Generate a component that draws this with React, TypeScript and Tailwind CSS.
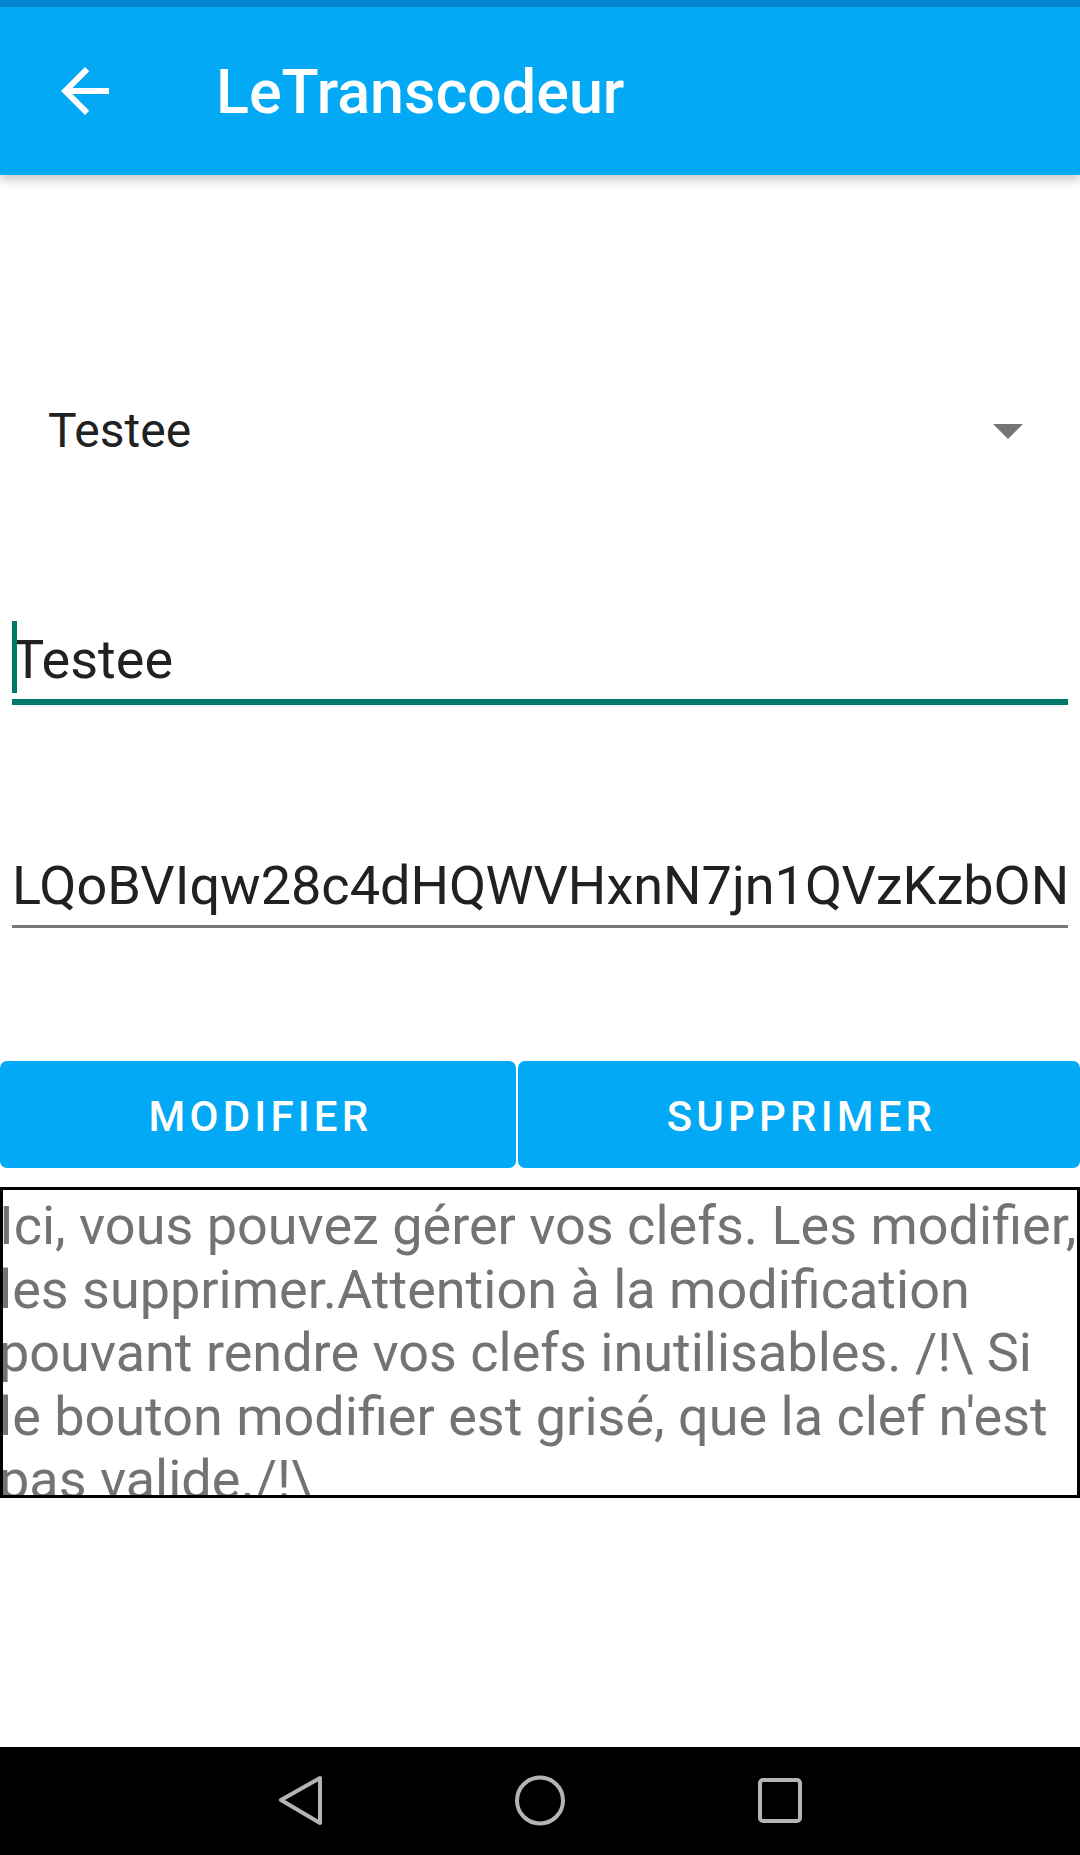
import React from "react";

function BackArrow() {
  return (
    <svg width="72" height="72" viewBox="0 0 24 24" className="ml-[49px] mt-[48px] shrink-0">
      <path fill="#ffffff" d="M20 11H7.83l5.59-5.59L12 4l-8 8 8 8 1.41-1.41L7.83 13H20v-2z" />
    </svg>
  );
}

function NavBar() {
  return (
    <div className="h-[108px] bg-black relative shrink-0">
      <svg width="1080" height="108" className="absolute left-0 top-0">
        <path
          d="M320 31 L281 53 L320 76 Z"
          fill="none"
          stroke="#b4b4b4"
          strokeWidth="4"
          strokeLinejoin="round"
        />
        <circle cx="540" cy="53.5" r="23" fill="none" stroke="#b4b4b4" strokeWidth="4" />
        <rect x="760" y="33" width="40" height="41" rx="3" fill="none" stroke="#b4b4b4" strokeWidth="4" />
      </svg>
    </div>
  );
}

export default function App() {
  return (
    <div className="w-[1080px] h-[1855px] flex flex-col bg-white font-[Roboto,sans-serif] overflow-hidden">
      <div className="h-[7px] bg-[#0288D1] shrink-0" />
      <div className="h-[168px] bg-[#03A9F4] flex items-start relative z-10 shrink-0 shadow-[0_5px_10px_rgba(0,0,0,0.22)]">
        <BackArrow />
        <div className="ml-[95px] mt-[50px] text-[61px] leading-[71px] font-medium text-white">
          LeTranscodeur
        </div>
      </div>

      <div className="flex-1 flex flex-col">
        {/* Spinner */}
        <div className="mt-[228px] h-[56px] flex items-center justify-between pl-[48px] pr-[57px]">
          <span className="text-[48px] leading-[56px] text-[#212121]">Testee</span>
          <svg width="30" height="15" viewBox="0 0 30 15">
            <path d="M0 0 L30 0 L15 15 Z" fill="#757575" />
          </svg>
        </div>

        {/* Edit text 1 (focused) */}
        <div className="mt-[169px] mx-[12px] relative">
          <div className="text-[54px] leading-[63px] text-[#212121]">Testee</div>
          <div className="absolute left-0 top-[-7px] w-[5px] h-[72px] bg-[#00796B]" />
          <div className="mt-[8px] h-[6px] bg-[#00796B]" />
        </div>

        {/* Edit text 2 */}
        <div className="mt-[149px] mx-[12px]">
          <div className="text-[54px] leading-[63px] text-[#212121] whitespace-nowrap overflow-hidden">
            LQoBVIqw28c4dHQWVHxnN7jn1QVzKzbON
          </div>
          <div className="mt-[8px] h-[3px] bg-[#777777]" />
        </div>

        {/* Buttons */}
        <div className="mt-[133px] h-[107px] flex gap-[2px]">
          <button className="w-[516px] h-full rounded-[7px] bg-[#03A9F4] text-white text-[42px] font-medium tracking-[4.2px] flex items-center justify-center pt-[3px] pl-[5px]">
            MODIFIER
          </button>
          <button className="flex-1 h-full rounded-[7px] bg-[#03A9F4] text-white text-[42px] font-medium tracking-[4.2px] flex items-center justify-center pt-[3px] pl-[5px]">
            SUPPRIMER
          </button>
        </div>

        {/* Info text */}
        <div className="mt-[19px] h-[311px] border-[3px] border-black overflow-hidden">
          <div className="pt-[4px] -ml-[4px] text-[54px] leading-[63.6px] text-[#737373] whitespace-nowrap">
            <div>Ici, vous pouvez gérer vos clefs. Les modifier,</div>
            <div>les supprimer.Attention à la modification</div>
            <div>pouvant rendre vos clefs inutilisables. /!\ Si</div>
            <div>le bouton modifier est grisé, que la clef n'est</div>
            <div>pas valide./!\</div>
          </div>
        </div>

        <div className="flex-1" />
      </div>

      <NavBar />
    </div>
  );
}
